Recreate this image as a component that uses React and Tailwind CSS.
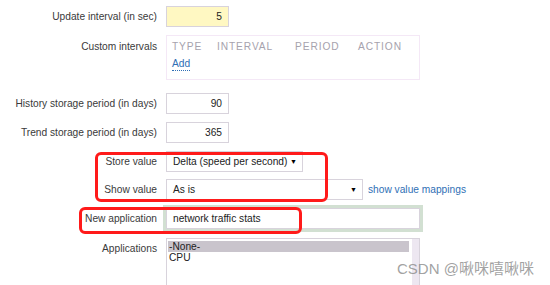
export default function App() {
  const label = "text-right text-[#3a3a3a] leading-[21px]";
  const input =
    "h-[21px] border border-[#d8d3dc] px-[6px] leading-[19px] text-[#222]";

  return (
    <div
      className="relative w-[550px] h-[285px] overflow-hidden bg-white text-[10.2px]"
      style={{ fontFamily: '"Liberation Sans", Arial, sans-serif' }}
    >
      <div className="grid grid-cols-[157px_1fr] gap-x-[9px] pt-[6px]">
        {/* update interval */}
        <div className={label}>Update interval (in sec)</div>
        <div>
          <div className={input + " w-[63px] bg-[#fff8c2] text-right"}>5</div>
        </div>

        {/* custom intervals */}
        <div className={label + " mt-[8px] pt-[1px]"}>Custom intervals</div>
        <div className="mt-[8px]">
          <div className="w-[254px] h-[45px] border border-[#f4e8f6] pl-[5px] pt-[3px]">
            <div className="flex text-[#a6a2ad] tracking-[0.9px] leading-[16px]">
              <span className="w-[45px]">TYPE</span>
              <span className="w-[78px]">INTERVAL</span>
              <span className="w-[63px]">PERIOD</span>
              <span>ACTION</span>
            </div>
            <span className="text-[#2f6fb5] border-b border-dotted border-[#2f6fb5] leading-[12px] inline-block mt-[3px]">
              Add
            </span>
          </div>
        </div>

        {/* history */}
        <div className={label + " mt-[13px]"}>History storage period (in days)</div>
        <div className="mt-[13px]">
          <div className={input + " w-[63px] bg-white text-right"}>90</div>
        </div>

        {/* trend */}
        <div className={label + " mt-[8px]"}>Trend storage period (in days)</div>
        <div className="mt-[8px]">
          <div className={input + " w-[63px] bg-white text-right"}>365</div>
        </div>

        {/* store value */}
        <div className={label + " mt-[8px]"}>Store value</div>
        <div className="mt-[8px]">
          <div className={input + " w-[137px] bg-white flex items-center justify-between pr-[5px]"}>
            <span>Delta (speed per second)</span>
            <span className="text-[7px] text-black">▼</span>
          </div>
        </div>

        {/* show value */}
        <div className={label + " mt-[7px]"}>Show value</div>
        <div className="mt-[7px] flex items-center gap-[5px]">
          <div className={input + " w-[197px] bg-white flex items-center justify-between pr-[5px]"}>
            <span>As is</span>
            <span className="text-[7px] text-black">▼</span>
          </div>
          <span className="text-[#2f6fb5]">show value mappings</span>
        </div>

        {/* new application */}
        <div className={label + " mt-[8px]"}>New application</div>
        <div className="mt-[8px]">
          <div className={input + " w-[254px] bg-white outline-[3px] outline-solid outline-[#d2e0d2]"}>
            network traffic stats
          </div>
        </div>

        {/* applications */}
        <div className={label + " mt-[9px] leading-[18px]"}>Applications</div>
        <div className="mt-[9px]">
          <div className="w-[254px] h-[60px] border border-[#d8d3dc] flex">
            <div className="flex-1 pt-[2px] pl-[1px] leading-[11px] text-[#222]">
              <div className="bg-[#c9c4cc] pl-[1px] mr-[3px]">-None-</div>
              <div className="pl-[1px]">CPU</div>
            </div>
            <div className="w-[7px] bg-[#ede7f1]" />
          </div>
        </div>
      </div>

      {/* red annotation boxes */}
      <div className="absolute left-[95px] top-[152px] w-[233px] h-[50px] border-[3px] border-[#ff1a1a] rounded-[6px]" />
      <div className="absolute left-[79px] top-[207px] w-[223px] h-[27px] border-[3px] border-[#ff1a1a] rounded-[6px]" />

      {/* watermark */}
      <div
        className="absolute left-[397px] top-[260px] text-[15px] text-[#8a8a8a]/80 leading-[18px]"
        style={{ fontFamily: '"Liberation Sans", "Noto Sans CJK SC", sans-serif' }}
      >
        CSDN @啾咪嘻啾咪
      </div>
    </div>
  );
}
